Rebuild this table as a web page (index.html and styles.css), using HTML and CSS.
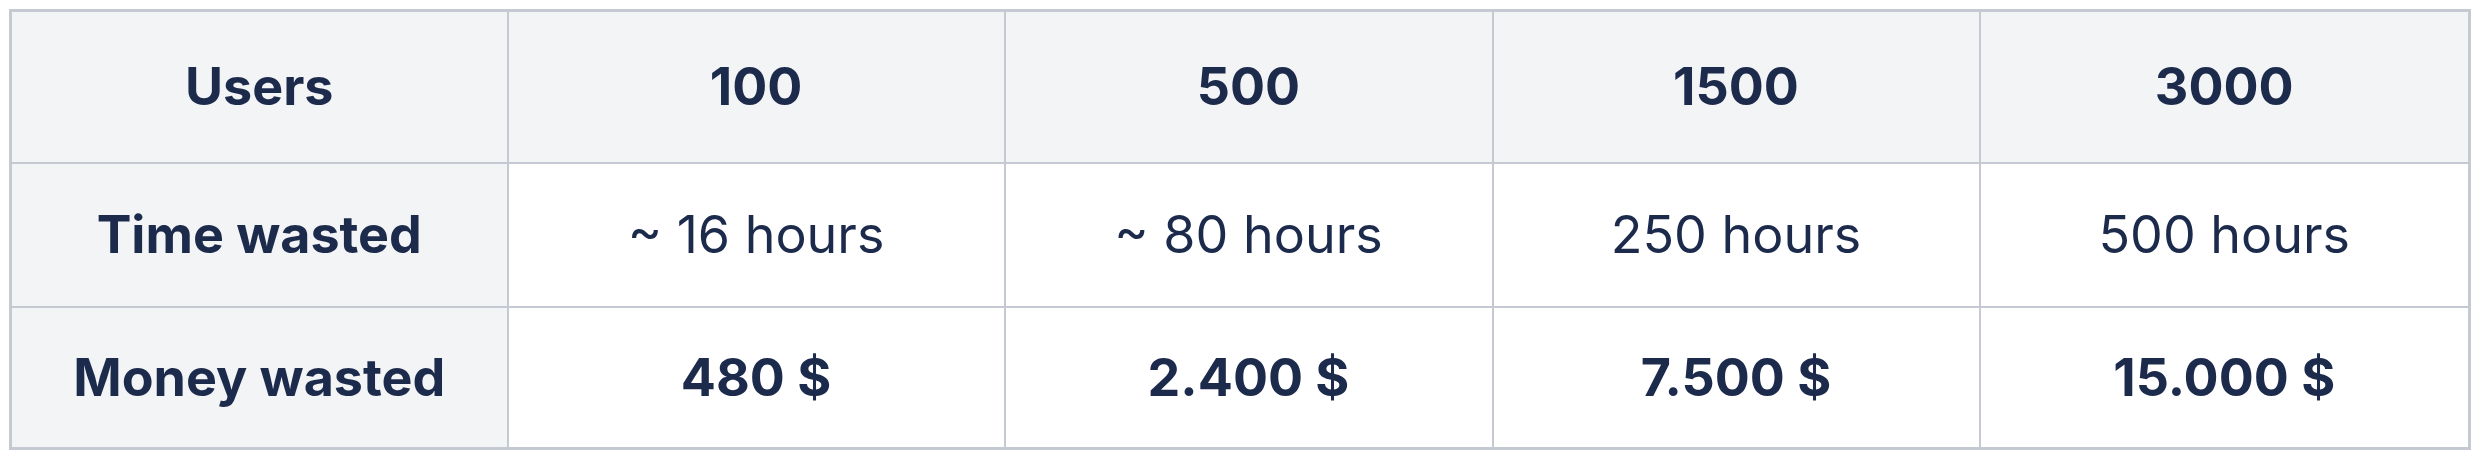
FILE: index.html
```html
<!DOCTYPE html>
<html>
<head>
<meta charset="utf-8">
<link rel="stylesheet" href="styles.css">
</head>
<body>
<div class="wrap">
<table class="cost">
<colgroup>
<col class="c1"><col class="c2"><col class="c3"><col class="c4"><col class="c5">
</colgroup>
<tr class="head">
<th>Users</th><th>100</th><th>500</th><th>1500</th><th>3000</th>
</tr>
<tr class="time">
<th>Time wasted</th><td>~ 16 hours</td><td>~ 80 hours</td><td>250 hours</td><td>500 hours</td>
</tr>
<tr class="money">
<th>Money wasted</th><td>480 $</td><td>2.400 $</td><td>7.500 $</td><td>15.000 $</td>
</tr>
</table>
</div>
</body>
</html>
```
FILE: styles.css
```css
html, body {
  margin: 0;
  padding: 0;
  background: #ffffff;
}
.wrap {
  padding: 9px 0 0 9px;
}
.cost {
  border-collapse: collapse;
  table-layout: fixed;
  width: 2459px;
  border: 3px solid #c5c9d2;
  font-family: Inter, "Noto Sans", sans-serif;
  font-size: 52px;
  color: #1c2a4b;
}
.c1 { width: 497px; }
.c2 { width: 497px; }
.c3 { width: 488px; }
.c4 { width: 487px; }
.c5 { width: 490px; }
.cost th, .cost td {
  border: 2.5px solid #c5c9d2;
  text-align: center;
  vertical-align: middle;
  padding: 0;
}
.cost th {
  background: #f3f4f6;
  font-weight: 700;
}
.cost td {
  background: #ffffff;
  font-weight: 400;
}
.money td {
  font-weight: 700;
}
.head { height: 152px; }
.time { height: 144px; }
.money { height: 142px; }
```
